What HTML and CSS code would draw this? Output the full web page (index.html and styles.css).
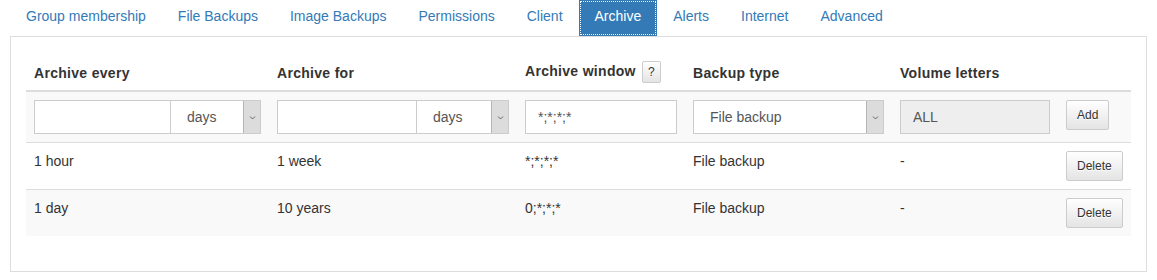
FILE: index.html
```html
<!DOCTYPE html>
<html lang="en">
<head>
    <meta charset="UTF-8">
    <title>Archive settings</title>
    <link rel="stylesheet" href="styles.css">
</head>
<body>
    <div class="page">
        <ul class="tabs">
            <li><a href="#">Group membership</a></li>
            <li><a href="#">File Backups</a></li>
            <li><a href="#">Image Backups</a></li>
            <li><a href="#">Permissions</a></li>
            <li><a href="#">Client</a></li>
            <li class="active"><a href="#">Archive</a></li>
            <li><a href="#">Alerts</a></li>
            <li><a href="#">Internet</a></li>
            <li><a href="#">Advanced</a></li>
        </ul>

        <div class="panel">
            <table class="archive-table">
                <colgroup>
                    <col class="col-every">
                    <col class="col-for">
                    <col class="col-window">
                    <col class="col-type">
                    <col class="col-letters">
                    <col class="col-action">
                </colgroup>
                <thead>
                    <tr>
                        <th>Archive every</th>
                        <th>Archive for</th>
                        <th>Archive window <button class="btn btn-xs">?</button></th>
                        <th>Backup type</th>
                        <th>Volume letters</th>
                        <th></th>
                    </tr>
                </thead>
                <tbody>
                    <tr class="striped">
                        <td>
                            <div class="input-group">
                                <input class="form-control" type="text">
                                <div class="select select-unit">
                                    <span class="select-value">days</span>
                                    <span class="select-arrow"><svg width="7" height="5" viewBox="0 0 7 5"><path d="M1 1.5 L3.5 4 L6 1.5" fill="none" stroke="#666" stroke-width="1"/></svg></span>
                                </div>
                            </div>
                        </td>
                        <td>
                            <div class="input-group">
                                <input class="form-control" type="text">
                                <div class="select select-unit wide">
                                    <span class="select-value">days</span>
                                    <span class="select-arrow"><svg width="7" height="5" viewBox="0 0 7 5"><path d="M1 1.5 L3.5 4 L6 1.5" fill="none" stroke="#666" stroke-width="1"/></svg></span>
                                </div>
                            </div>
                        </td>
                        <td><input class="form-control" type="text" value="*;*;*;*"></td>
                        <td>
                            <div class="select">
                                <span class="select-value">File backup</span>
                                <span class="select-arrow"><svg width="7" height="5" viewBox="0 0 7 5"><path d="M1 1.5 L3.5 4 L6 1.5" fill="none" stroke="#666" stroke-width="1"/></svg></span>
                            </div>
                        </td>
                        <td><input class="form-control" type="text" value="ALL" disabled></td>
                        <td><button class="btn btn-sm">Add</button></td>
                    </tr>
                    <tr>
                        <td>1 hour</td>
                        <td>1 week</td>
                        <td>*;*;*;*</td>
                        <td>File backup</td>
                        <td>-</td>
                        <td><button class="btn btn-sm">Delete</button></td>
                    </tr>
                    <tr class="striped">
                        <td>1 day</td>
                        <td>10 years</td>
                        <td>0;*;*;*</td>
                        <td>File backup</td>
                        <td>-</td>
                        <td><button class="btn btn-sm">Delete</button></td>
                    </tr>
                </tbody>
            </table>
        </div>
    </div>
</body>
</html>
```

FILE: styles.css
```css
body {
    margin: 0;
    background: #fff;
    color: #333;
    font-family: "Liberation Sans", Arial, sans-serif;
    font-size: 14px;
    line-height: 20px;
}
.page {
    padding: 0 10px;
}
.tabs {
    list-style: none;
    margin: 0;
    padding: 0;
    display: flex;
    border-bottom: 1px solid #ddd;
}
.tabs a {
    display: block;
    padding: 5px 15px 9px;
    border: 1px solid transparent;
    color: #337ab7;
    text-decoration: none;
}
.tabs .active a {
    background: #337ab7;
    color: #fff;
    outline: 1px dotted #fff;
    outline-offset: -2px;
}
.panel {
    border: 1px solid #ddd;
    border-top: none;
    padding: 15px 15px 15px;
}
.archive-table {
    width: 100%;
    border-collapse: collapse;
    margin-bottom: 20px;
}
.col-every { width: 243px; }
.col-for { width: 248px; }
.col-window { width: 168px; }
.col-type { width: 207px; }
.col-letters { width: 166px; }
.archive-table th {
    text-align: left;
    font-weight: bold;
    letter-spacing: 0.3px;
    padding: 9px 8px 7px;
    vertical-align: bottom;
    border-bottom: 2px solid #ddd;
}
.archive-table td {
    padding: 8px;
    vertical-align: top;
    border-top: 1px solid #ddd;
}
.archive-table tbody tr:first-child td {
    border-top: none;
}
.striped {
    background: #f9f9f9;
}
.input-group {
    display: flex;
}
.form-control {
    box-sizing: border-box;
    width: 100%;
    height: 34px;
    padding: 6px 12px;
    border: 1px solid #ccc;
    border-radius: 0;
    background: #fff;
    color: #555;
    font-family: inherit;
    font-size: 14px;
    margin: 0;
    min-width: 0;
}
.form-control:disabled {
    background: #eee;
}
.select {
    box-sizing: border-box;
    height: 34px;
    display: flex;
    align-items: stretch;
    border: 1px solid #ccc;
    background: #fff;
    color: #555;
}
.select-unit {
    flex: 0 0 90px;
    border-left: none;
}
.select-unit.wide {
    flex-basis: 92px;
}
.select-value {
    flex: 1;
    padding: 6px 0 6px 16px;
}
.select-arrow {
    width: 16px;
    display: flex;
    align-items: center;
    justify-content: center;
    background: #dcdcdc;
    border-left: 1px solid #b5b5b5;
}
.btn {
    font-family: inherit;
    color: #333;
    border: 1px solid #ccc;
    border-radius: 2px;
    background: linear-gradient(to bottom, #fff 0, #e4e4e4 100%);
    text-shadow: 0 1px 0 #fff;
    cursor: pointer;
    margin: 0;
}
.btn-sm {
    padding: 5px 10px;
    font-size: 12px;
    line-height: 18px;
}
.btn-xs {
    padding: 1px 5px;
    font-size: 12px;
    line-height: 18px;
    letter-spacing: 0;
    margin-left: 2px;
}
```
